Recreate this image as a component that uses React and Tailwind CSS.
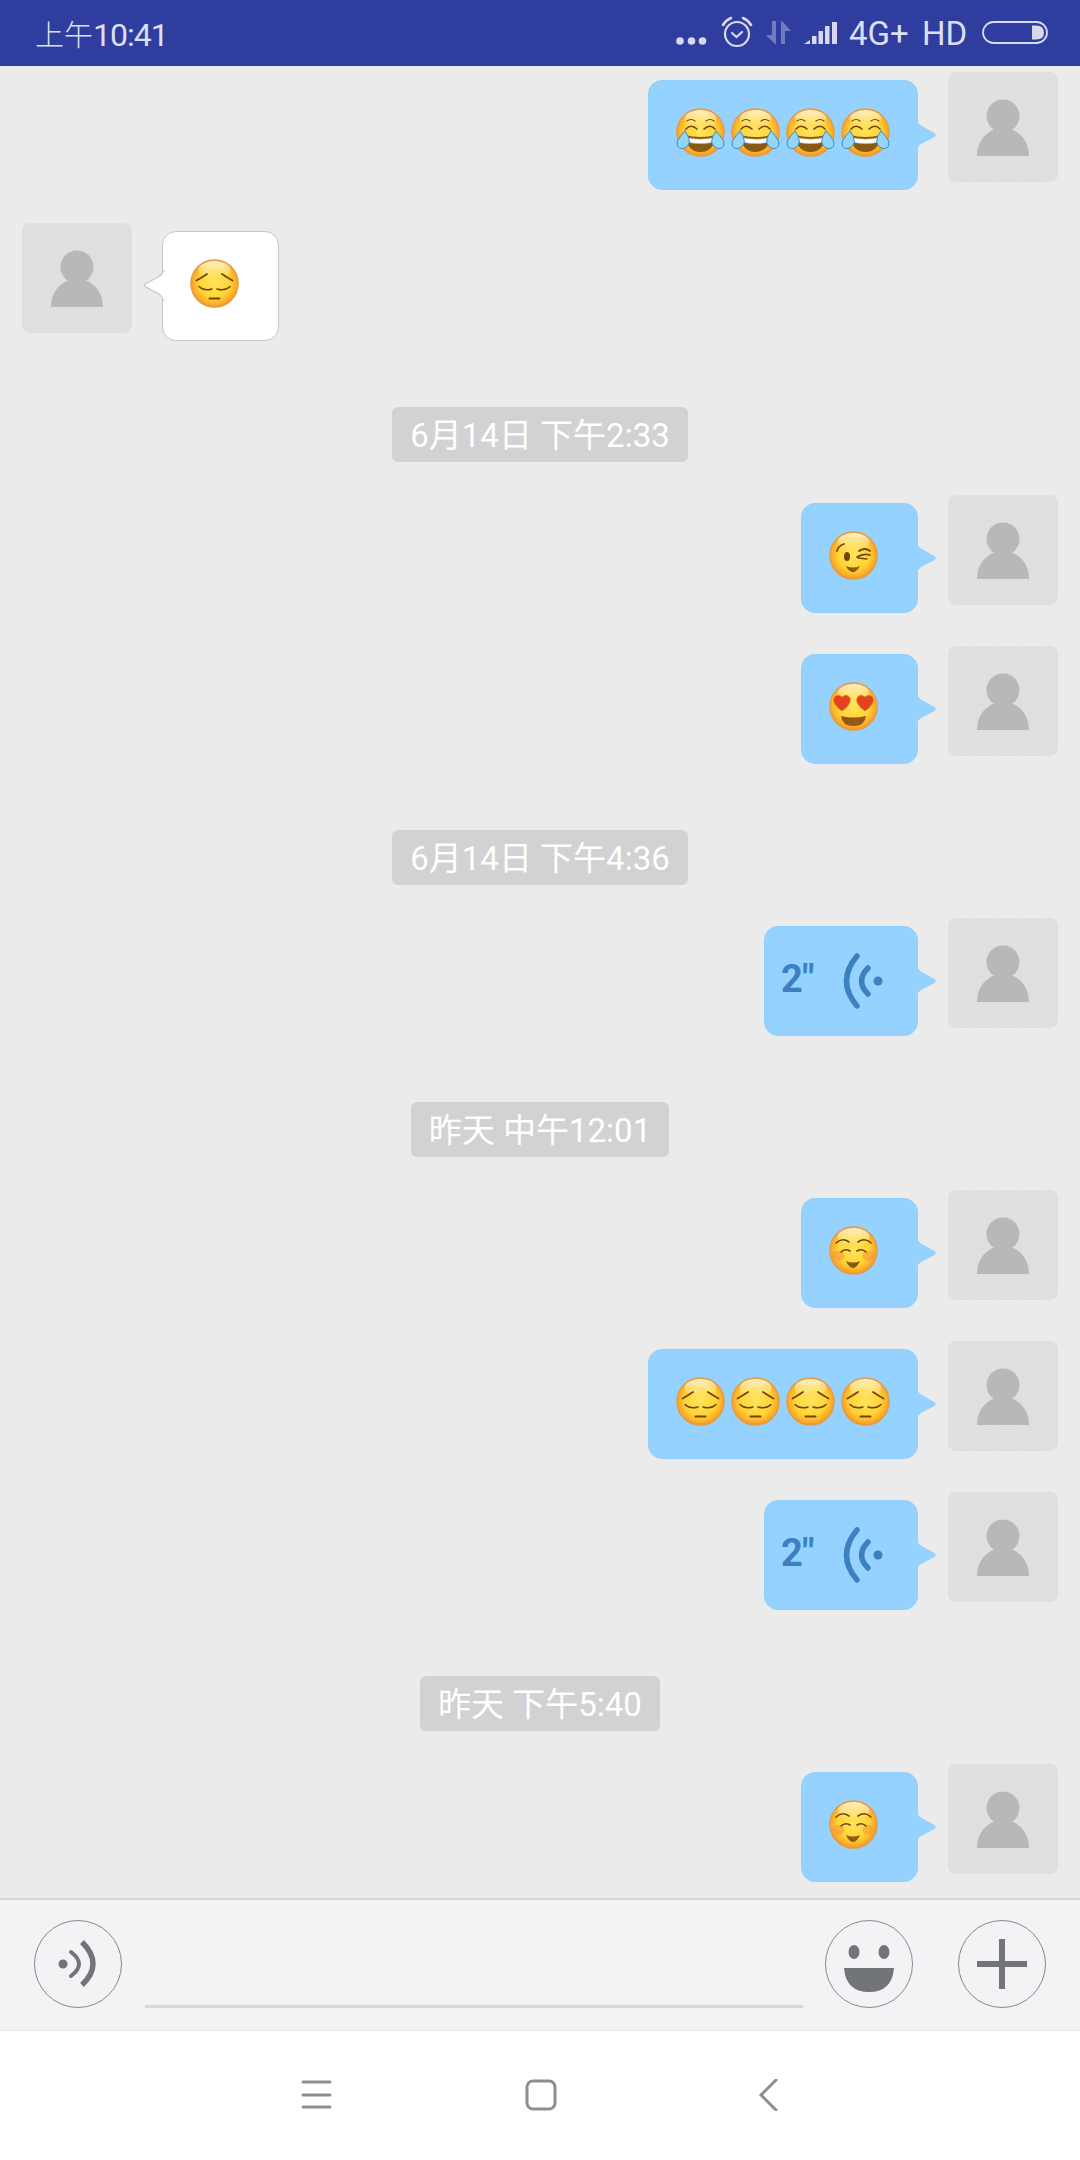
import React, { useId } from "react";

const BROWN = "#6e4510";

function Emoji({ kind }) {
  const id = useId();
  const g = `g${id}`;
  return (
    <svg width="49" height="49" viewBox="0 0 49 49" className="shrink-0 block">
      <defs>
        <radialGradient id={g} cx="50%" cy="48%" r="54%">
          <stop offset="0%" stopColor="#ffe45c" />
          <stop offset="60%" stopColor="#ffd435" />
          <stop offset="84%" stopColor="#fbae28" />
          <stop offset="100%" stopColor="#e8902a" />
        </radialGradient>
        <linearGradient id={`${g}t`} x1="0" y1="0" x2="0" y2="1">
          <stop offset="0%" stopColor="#fff6d0" stopOpacity="0.95" />
          <stop offset="100%" stopColor="#fff6d0" stopOpacity="0" />
        </linearGradient>
      </defs>
      <circle cx="24.5" cy="24.5" r="23.7" fill={`url(#${g})`} stroke="#e69a48" strokeWidth="1.2" />
      <ellipse cx="24.5" cy="11" rx="16" ry="9" fill={`url(#${g}t)`} />
      {kind === "joy" && (
        <g fill="none" stroke={BROWN} strokeLinecap="round">
          <path d="M11 13 Q15 10 19 13" strokeWidth="1.2" />
          <path d="M38 13 Q34 10 30 13" strokeWidth="1.2" />
          <path d="M10 21 Q15 15.5 21 21" strokeWidth="1.6" />
          <path d="M39 21 Q34 15.5 28 21" strokeWidth="1.6" />
          <path d="M9 27 Q24.5 31 40 27 Q38 44 24.5 44 Q11 44 9 27 Z" fill="#8a5a14" stroke="none" />
          <path d="M10 29.5 Q24.5 33 39 29.5 L38 34 Q24.5 37 11 34 Z" fill="#fff" stroke="#cfc8b4" strokeWidth="0.5" />
          <path d="M9 23 Q4 28 1.5 33 Q0 39.5 5 40.5 Q11 41 13.5 34 Q13 28 9 23 Z" fill="#93d6f7" stroke="#3a8fd0" strokeWidth="1" />
          <path d="M40 23 Q45 28 47.5 33 Q49 39.5 44 40.5 Q38 41 35.5 34 Q36 28 40 23 Z" fill="#93d6f7" stroke="#3a8fd0" strokeWidth="1" />
        </g>
      )}
      {kind === "pensive" && (
        <g fill="none" stroke={BROWN} strokeLinecap="round" strokeWidth="1.8">
          <path d="M6.5 21.5 Q11 19 17 15" />
          <path d="M42.5 21.5 Q38 19 32 15" />
          <path d="M9 27.5 Q14 32.5 22 30" strokeWidth="1.5" />
          <path d="M40 27.5 Q35 32.5 27 30" strokeWidth="1.5" />
          <path d="M19.5 39.5 H29.5" strokeWidth="2" />
        </g>
      )}
      {kind === "wink" && (
        <g fill="none" stroke={BROWN} strokeLinecap="round">
          <path d="M8 20 Q9 15 15 13" strokeWidth="1.8" />
          <ellipse cx="18" cy="25.5" rx="3" ry="4.5" fill={BROWN} stroke="none" />
          <path d="M30 20 Q36 16 41 20" strokeWidth="1.8" />
          <path d="M28 26 Q34 22 41 24" strokeWidth="1.8" />
          <path d="M29 27 L38 28" strokeWidth="1.4" />
          <path d="M17 35 Q24 38 31 35 Q27 42 23 41 Q19 40 17 35 Z" fill="#8a5a10" stroke="none" />
        </g>
      )}
      {kind === "hearts" && (
        <g>
          <path d="M13 29 Q3 22 5 16 Q8 11 13 15 Q18 11 21 16 Q23 22 13 29 Z" fill="#e8401f" stroke="#b8861f" strokeWidth="0.7" />
          <path d="M36 29 Q26 22 28 16 Q31 11 36 15 Q41 11 44 16 Q46 22 36 29 Z" fill="#e8401f" stroke="#b8861f" strokeWidth="0.7" />
          <path d="M12 34 Q24.5 37 37 34 Q36 44 24.5 44 Q13 44 12 34 Z" fill="#95561a" />
        </g>
      )}
      {kind === "blush" && (
        <g fill="none" stroke={BROWN} strokeLinecap="round" strokeWidth="1.6">
          <ellipse cx="9" cy="30" rx="6.5" ry="5" fill="#f79a3a" opacity="0.6" stroke="none" />
          <ellipse cx="40" cy="30" rx="6.5" ry="5" fill="#f79a3a" opacity="0.6" stroke="none" />
          <path d="M7 17 Q13 11 20 16" />
          <path d="M29 16 Q36 11 42 17" />
          <path d="M12 26 Q16 22 21 25" />
          <path d="M28 25 Q33 22 37 26" />
          <path d="M17 35 Q24 38 31 35 Q28 42 24 42 Q20 42 17 35 Z" fill="#8a5a10" stroke="none" />
        </g>
      )}
    </svg>
  );
}

function Avatar() {
  return (
    <div className="w-[110px] h-[110px] shrink-0 rounded-[8px] bg-[#e0e0e0] bg-[radial-gradient(#dadada_1px,transparent_1px)] bg-[length:3px_3px]">
      <svg width="110" height="110" viewBox="0 0 110 110" className="block">
        <circle cx="55" cy="44" r="16.5" fill="#b8b8b8" />
        <path d="M29 84 C29 67 41 56 55 56 C69 56 81 67 81 84 Z" fill="#b8b8b8" />
      </svg>
    </div>
  );
}

function Bubble({ children, className }) {
  return (
    <div className={`relative mt-[8px] h-[110px] rounded-[14px] border border-[#90cffd] bg-[#95d2ff] ${className}`}>
      {children}
      <svg width="22" height="32" viewBox="0 0 22 32" className="absolute left-full top-[38px] -ml-[2px]">
        <path d="M0 1 H2 Q3 5 6 6.5 L19.5 14 Q22 16 19.5 18 L6 25 Q3 27 2 31 H0 Z" fill="#95d2ff" />
      </svg>
    </div>
  );
}

function Me({ kinds }) {
  return (
    <div className="flex justify-end gap-[30px] pr-[22px]">
      <Bubble className="min-w-[117px] flex items-start gap-[6px] pl-[27px] pr-[27px] pt-[27px]">
        {kinds.map((k, i) => (
          <Emoji key={i} kind={k} />
        ))}
      </Bubble>
      <Avatar />
    </div>
  );
}

function Voice() {
  return (
    <div className="flex justify-end gap-[30px] pr-[22px]">
      <Bubble className="w-[154px] flex items-center pl-[16px]">
        <span className="font-['Roboto',sans-serif] font-bold text-[38px] leading-none text-[#3d80c0] tracking-[-0.5px] -mt-[4px]">2"</span>
        <svg width="50" height="60" viewBox="0 0 50 60" className="absolute left-[74px] top-[24px]">
          <g fill="none" stroke="#3d80c0" strokeWidth="5.5" strokeLinecap="round">
            <path d="M18 5 Q-3 30 18 55" />
            <path d="M29 17 Q16 30 29 43" />
          </g>
          <circle cx="39" cy="30" r="4.5" fill="#3d80c0" />
        </svg>
      </Bubble>
      <Avatar />
    </div>
  );
}

function Other() {
  return (
    <div className="flex gap-[30px] pl-[22px]">
      <Avatar />
      <div className="relative mt-[8px] h-[110px] w-[117px] rounded-[14px] border-[1.5px] border-[#c6c6c6] bg-white pl-[27px] pt-[27px]">
        <Emoji kind="pensive" />
        <svg width="22" height="32" viewBox="0 0 22 32" className="absolute right-full top-[37px] -mr-[2px]">
          <path d="M22 2 H20 Q19 6 16 7.5 L3 14.5 Q0 16 3 18 L16 25 Q19 27 20 31 H22" fill="#fff" stroke="#c6c6c6" strokeWidth="1.2" />
          <rect x="20.5" y="3" width="2" height="27" fill="#fff" />
        </svg>
      </div>
    </div>
  );
}

function Stamp({ children }) {
  return (
    <div className="flex justify-center mt-[33px]">
      <div className="h-[55px] flex items-center px-[18px] pt-[3px] rounded-[6px] bg-[#d2d2d2] text-white text-[33px] font-['Roboto','Noto_Sans_CJK_SC',sans-serif] whitespace-pre">
        {children}
      </div>
    </div>
  );
}

function StatusIcons() {
  const c = "#d6d9ef";
  return (
    <>
      <svg width="35" height="10" viewBox="0 0 35 10" className="absolute left-[676px] top-[36px]">
        <circle cx="4" cy="5" r="3.8" fill={c} />
        <circle cx="15.5" cy="5" r="3.8" fill={c} />
        <circle cx="26.5" cy="5" r="3.8" fill={c} />
      </svg>
      <svg width="32" height="32" viewBox="0 0 32 32" className="absolute left-[721px] top-[16px]" fill="none" stroke={c}>
        <circle cx="16" cy="18" r="12" strokeWidth="2.2" />
        <path d="M11 17 L15.5 21 L21 16" strokeWidth="2.2" strokeLinecap="round" />
        <path d="M2 9 Q5 4 10 2" strokeWidth="2.6" strokeLinecap="round" />
        <path d="M30 9 Q27 4 22 2" strokeWidth="2.6" strokeLinecap="round" />
      </svg>
      <svg width="26" height="24" viewBox="0 0 26 24" className="absolute left-[766px] top-[21px]" fill="#6f7cc0">
        <path d="M6 0 H10 V23 H9 L0 14 H6 Z" />
        <path d="M15 23 H19 V10 H25 L16 0 H15 Z" />
      </svg>
      <svg width="36" height="24" viewBox="0 0 36 24" className="absolute left-[803px] top-[21px]" fill={c}>
        <path d="M1 23 L7 19 V23 Z" />
        <rect x="9" y="15" width="4.5" height="8" />
        <rect x="15.5" y="10" width="4.5" height="13" />
        <rect x="22" y="5" width="4.5" height="18" />
        <rect x="29" y="1" width="5" height="22" />
      </svg>
      <svg width="68" height="26" viewBox="0 0 68 26" className="absolute left-[981px] top-[20px]">
        <rect x="2" y="2" width="64" height="21" rx="10.5" fill="none" stroke={c} strokeWidth="1.8" />
        <path d="M51 5.5 H55 Q63 5.5 63 12.5 Q63 19.5 55 19.5 H51 Z" fill={c} />
      </svg>
    </>
  );
}

function RoundBtn({ children }) {
  return (
    <div className="w-[88px] h-[88px] shrink-0 rounded-full border-[1.5px] border-[#85898d] flex items-center justify-center">
      {children}
    </div>
  );
}

export default function App() {
  return (
    <div className="relative w-[1080px] h-[2160px] flex flex-col overflow-hidden bg-[#ebebeb]">
      <div className="relative h-[66px] shrink-0 bg-[#2f3e9e] text-[#dcdff2] font-['Roboto','Noto_Sans_CJK_SC',sans-serif]">
        <div className="absolute left-[35px] top-[13px] text-[32px] leading-[40px] whitespace-nowrap">
          <span className="text-[29px] font-['Noto_Sans_CJK_SC',sans-serif] font-light">上午</span>
          <span className="tracking-[-1px]">10:41</span>
        </div>
        <div className="absolute left-[849px] top-[12px] text-[33px] leading-[44px] whitespace-nowrap">4G+</div>
        <div className="absolute left-[922px] top-[12px] text-[33px] leading-[44px] whitespace-nowrap">HD</div>
        <StatusIcons />
      </div>

      <div className="flex-1 min-h-0 overflow-hidden pt-[6px] flex flex-col gap-[33px]">
        <Me kinds={["joy", "joy", "joy", "joy"]} />
        <Other />
        <Stamp>6月14日 下午2:33</Stamp>
        <Me kinds={["wink"]} />
        <Me kinds={["hearts"]} />
        <Stamp>6月14日 下午4:36</Stamp>
        <Voice />
        <Stamp>昨天 中午12:01</Stamp>
        <Me kinds={["blush"]} />
        <Me kinds={["pensive", "pensive", "pensive", "pensive"]} />
        <Voice />
        <Stamp>昨天 下午5:40</Stamp>
        <Me kinds={["blush"]} />
      </div>

      <div className="h-[133px] shrink-0 bg-[#f3f3f5] border-t-2 border-t-[#d6d6d6] border-b border-b-[#e4e4e4] pt-[20px] pl-[34px] pr-[34px] flex items-start">
        <RoundBtn>
          <svg width="44" height="50" viewBox="0 0 44 50" fill="none" stroke="#71757a">
            <circle cx="7" cy="25" r="4.5" fill="#71757a" stroke="none" />
            <path d="M15 13 Q31 25 15 37" strokeWidth="4" strokeLinecap="round" />
            <path d="M26 3 Q48 25 26 46" strokeWidth="5.5" />
          </svg>
        </RoundBtn>
        <div className="ml-[23px] mr-[22px] flex-1 h-[88px] border-b-[3px] border-b-[#d8d8d8]" />
        <RoundBtn>
          <svg width="60" height="60" viewBox="0 0 60 60" fill="#71757a">
            <ellipse cx="15" cy="18" rx="5.5" ry="7" />
            <ellipse cx="45" cy="18" rx="5.5" ry="7" />
            <path d="M5 34 H55 Q53 58 30 58 Q7 58 5 34 Z" />
          </svg>
        </RoundBtn>
        <div className="ml-[45px]">
          <RoundBtn>
            <svg width="50" height="50" viewBox="0 0 50 50" fill="#71757a">
              <rect x="22" y="0" width="6" height="50" />
              <rect x="0" y="22" width="50" height="6" />
            </svg>
          </RoundBtn>
        </div>
      </div>

      <div className="h-[129px] shrink-0 bg-white relative">
        <div className="flex items-start justify-center gap-[192px] pt-[48px]">
          <svg width="34" height="32" viewBox="0 0 34 32" fill="none" stroke="#8e8e8e" strokeWidth="3" strokeLinecap="round">
            <path d="M4 3 H31 M4 16 H31 M4 28 H31" />
          </svg>
          <svg width="32" height="32" viewBox="0 0 32 32" fill="none" stroke="#8e8e8e" strokeWidth="3">
            <rect x="2" y="2" width="28" height="28" rx="6" />
          </svg>
          <svg width="32" height="32" viewBox="0 0 32 32" fill="none" stroke="#8e8e8e" strokeWidth="3" strokeLinecap="round">
            <path d="M27 1 L12 16 L27 31" />
          </svg>
        </div>
      </div>
    </div>
  );
}
